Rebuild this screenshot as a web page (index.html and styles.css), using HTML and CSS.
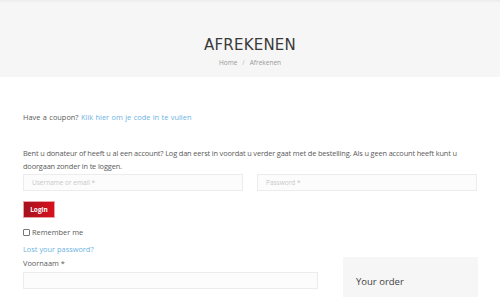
FILE: index.html
```html
<!DOCTYPE html>
<html lang="nl">
<head>
	<meta charset="UTF-8">
	<title>Afrekenen</title>
	<link rel="stylesheet" href="styles.css">
</head>
<body>
	<div class="pageTitle">
		<h1>AFREKENEN</h1>
		<div class="crumbs"><a href="">Home</a><span class="sep">/</span><span>Afrekenen</span></div>
	</div>
	<div class="content">
		<div class="coupon">Have a coupon? <a href="">Klik hier om je code in te vullen</a></div>
		<p class="intro">Bent u donateur of heeft u al een account? Log dan eerst in voordat u verder gaat met de bestelling. Als u geen account heeft kunt u doorgaan zonder in te loggen.</p>
		<div class="loginRow">
			<input type="text" placeholder="Username or email *">
			<input type="password" placeholder="Password *">
		</div>
		<button class="loginBtn">Login</button>
		<label class="remember"><input type="checkbox"> Remember me</label>
		<a class="lost" href="">Lost your password?</a>
		<div class="bottom">
			<div class="billing">
				<label class="fieldLabel">Voornaam *</label>
				<input type="text">
			</div>
			<div class="order">
				<h3>Your order</h3>
			</div>
		</div>
	</div>
</body>
</html>
```

FILE: styles.css
```css
*{
	margin: 0;
	padding: 0;
	box-sizing: border-box;
}
html, body{
	height: 298px;
	overflow: hidden;
}
body{
	font-family: "Open Sans", sans-serif;
	color: #5a5a5a;
	background: #fff;
}
a{
	color: #6db3e3;
	text-decoration: none;
}
.pageTitle{
	height: 77px;
	background: #f6f6f6;
	box-shadow: inset 0 3px 3px -2px rgba(0,0,0,0.06);
	text-align: center;
	padding-top: 37px;
}
.pageTitle h1{
	font-family: "DejaVu Sans", sans-serif;
	font-size: 15px;
	font-weight: normal;
	color: #3a3a3a;
	letter-spacing: 0.2px;
	line-height: 16px;
}
.crumbs{
	font-size: 6.5px;
	color: #999;
	margin-top: 5px;
}
.crumbs a{
	color: #999;
}
.crumbs .sep{
	margin: 0 5px;
	color: #bbb;
}
.content{
	padding: 0 22px 0 23px;
	font-size: 7.4px;
}
.coupon{
	margin-top: 35px;
	line-height: 10px;
	word-spacing: 0.5px;
}
.intro{
	margin-top: 25px;
	line-height: 13px;
	letter-spacing: -0.15px;
}
.loginRow{
	display: flex;
	gap: 14px;
	margin-top: 1px;
}
.loginRow input, .billing input{
	width: 220px;
	height: 17px;
	border: 1px solid #ececec;
	background: #fcfcfc;
	font-family: inherit;
	font-size: 6.5px;
	padding: 0 8px;
	color: #555;
}
.loginRow input::placeholder{
	color: #c8c8c8;
}
.loginBtn{
	display: block;
	margin-top: 10px;
	width: 32px;
	height: 17px;
	border: 1px solid #e8a0a6;
	background: linear-gradient(to right, #a5121d, #d8101e);
	color: #fff;
	font-family: inherit;
	font-size: 6.5px;
	font-weight: bold;
}
.remember{
	display: flex;
	align-items: center;
	gap: 2px;
	margin-top: 10px;
	line-height: 9px;
}
.remember input{
	width: 7px;
	height: 7px;
	margin: 0;
	appearance: none;
	border: 1px solid #777;
	border-radius: 1px;
	background: #fff;
}
.lost{
	display: block;
	margin-top: 8px;
	line-height: 9px;
}
.bottom{
	display: flex;
	gap: 25px;
	margin-top: 3px;
}
.billing{
	width: 295px;
	padding-top: 2px;
}
.fieldLabel{
	display: block;
	line-height: 9px;
}
.billing input{
	width: 295px;
	margin-top: 4px;
}
.order{
	width: 136px;
	height: 40px;
	margin-top: 0;
	background: #f6f6f6;
	padding: 18px 13px;
}
.order h3{
	font-size: 9.5px;
	font-weight: normal;
	color: #444;
}
```
